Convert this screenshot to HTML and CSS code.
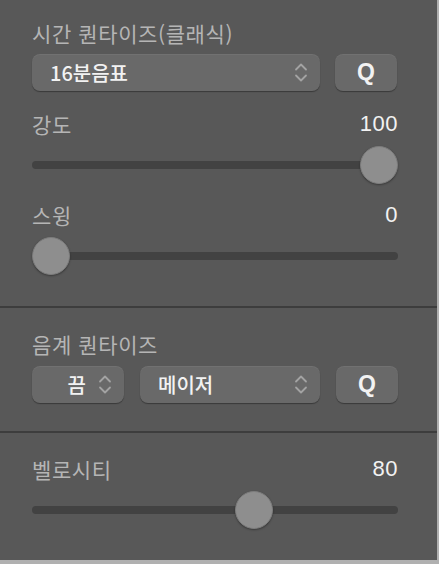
FILE: index.html
```html
<!DOCTYPE html>
<html lang="ko">
<head>
    <meta charset="UTF-8">
    <meta name="viewport" content="width=device-width, initial-scale=1.0">
    <title>퀀타이즈</title>
    <link rel="stylesheet" href="styles.css">
</head>
<body>
    <div class="panel">
        <section class="group group-time">
            <div class="title">시간 퀀타이즈(클래식)</div>
            <div class="row">
                <div class="popup popup-wide">
                    <span class="popup-text">16분음표</span>
                    <svg class="arrows" width="14" height="21" viewBox="0 0 14 21"><path d="M2 7.5 L7 2.5 L12 7.5 M2 13.5 L7 18.5 L12 13.5" fill="none" stroke="#a3a3a3" stroke-width="1.8" stroke-linecap="round" stroke-linejoin="round"/></svg>
                </div>
                <div class="button">Q</div>
            </div>

            <div class="label-row label-first">
                <span class="label">강도</span>
                <span class="value">100</span>
            </div>
            <div class="slider">
                <div class="track"></div>
                <div class="thumb" style="--pos: 1"></div>
            </div>

            <div class="label-row">
                <span class="label">스윙</span>
                <span class="value">0</span>
            </div>
            <div class="slider">
                <div class="track"></div>
                <div class="thumb" style="--pos: 0"></div>
            </div>
        </section>

        <div class="divider"></div>

        <section class="group group-scale">
            <div class="title">음계 퀀타이즈</div>
            <div class="row">
                <div class="popup popup-small">
                    <span class="popup-text">끔</span>
                    <svg class="arrows" width="14" height="21" viewBox="0 0 14 21"><path d="M2 7.5 L7 2.5 L12 7.5 M2 13.5 L7 18.5 L12 13.5" fill="none" stroke="#a3a3a3" stroke-width="1.8" stroke-linecap="round" stroke-linejoin="round"/></svg>
                </div>
                <div class="popup popup-mid">
                    <span class="popup-text">메이저</span>
                    <svg class="arrows" width="14" height="21" viewBox="0 0 14 21"><path d="M2 7.5 L7 2.5 L12 7.5 M2 13.5 L7 18.5 L12 13.5" fill="none" stroke="#a3a3a3" stroke-width="1.8" stroke-linecap="round" stroke-linejoin="round"/></svg>
                </div>
                <div class="button">Q</div>
            </div>
        </section>

        <div class="divider"></div>

        <section class="group group-velocity">
            <div class="label-row">
                <span class="label">벨로시티</span>
                <span class="value">80</span>
            </div>
            <div class="slider">
                <div class="track"></div>
                <div class="thumb" style="--pos: 0.62"></div>
            </div>
        </section>
    </div>
</body>
</html>
```

FILE: styles.css
```css
body {
    margin: 0;
    background: #b0b0b0;
    font-family: "Noto Sans CJK KR", "Noto Sans", sans-serif;
    width: 439px;
    height: 564px;
    overflow: hidden;
}
.panel {
    width: 437px;
    height: 560px;
    background: #585858;
    display: flex;
    flex-direction: column;
}
.group {
    padding: 0 39px 0 32px;
    display: flex;
    flex-direction: column;
}
.group-time {
    padding-top: 21px;
    padding-bottom: 31px;
}
.group-scale {
    padding-top: 24px;
    padding-bottom: 28px;
}
.group-velocity {
    padding-top: 24px;
}
.title, .label {
    font-size: 21px;
    line-height: 24px;
    letter-spacing: 0.6px;
    color: #b5b5b5;
}
.row {
    display: flex;
    gap: 15px;
    margin-top: 9px;
}
.group-scale .row {
    gap: 16px;
    margin-top: 10px;
}
.popup, .button {
    height: 37px;
    box-sizing: border-box;
    background: #696969;
    border-radius: 8px;
    box-shadow: 0 1px 1px rgba(0, 0, 0, 0.35), inset 0 1px 0 rgba(255, 255, 255, 0.06);
    color: #f2f2f2;
    font-size: 20px;
    font-weight: 500;
    display: flex;
    align-items: center;
}
.popup {
    padding: 0 12px 0 18px;
}
.popup-text {
    flex: 1;
}
.popup-wide {
    width: 288px;
}
.popup-small {
    width: 92px;
}
.popup-small .popup-text {
    text-align: right;
    padding-right: 12px;
}
.popup-mid {
    width: 180px;
}
.button {
    width: 62px;
    justify-content: center;
    font-family: "Liberation Sans", Arial, sans-serif;
    font-weight: bold;
    font-size: 23px;
}
.arrows {
    display: block;
}
.label-row {
    display: flex;
    justify-content: space-between;
    align-items: center;
    margin-top: 19px;
}
.label-first {
    margin-top: 21px;
}
.group-velocity .label-row {
    margin-top: 0;
}
.value {
    font-family: "Liberation Sans", Arial, sans-serif;
    font-size: 22px;
    line-height: 24px;
    letter-spacing: 0.5px;
    color: #f2f2f2;
}
.slider {
    position: relative;
    height: 38px;
    margin-top: 10px;
}
.track {
    position: absolute;
    left: 0;
    right: 0;
    top: 15px;
    height: 8px;
    border-radius: 4px;
    background: #424242;
}
.thumb {
    position: absolute;
    top: 0;
    left: calc((100% - 38px) * var(--pos));
    width: 38px;
    height: 38px;
    box-sizing: border-box;
    border-radius: 50%;
    background: #8e8e8e;
    border: 1px solid #7c7c7c;
    box-shadow: 0 1px 2px rgba(0, 0, 0, 0.35);
}
.divider {
    height: 2px;
    background: #3d3d3d;
    flex: none;
}
```
